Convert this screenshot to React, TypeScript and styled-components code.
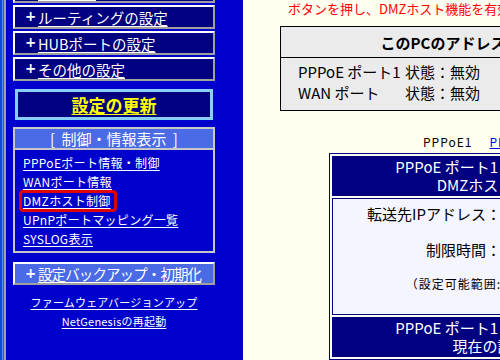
import React from "react";
import styled, { createGlobalStyle } from "styled-components";

const GlobalStyle = createGlobalStyle`
  html, body {
    margin: 0;
    padding: 0;
    width: 500px;
    height: 360px;
    overflow: hidden;
    background: #fffff0;
  }
  body {
    font-family: "Noto Sans CJK JP", "Noto Sans", sans-serif;
  }
`;

const Page = styled.div`
  display: flex;
  width: 500px;
  height: 360px;
  overflow: hidden;
`;

const Edge = styled.div`
  flex: none;
  width: 6px;
  background: linear-gradient(to right, #1848d8 0 2px, #5a8cff 2px 3px, #2858e0 3px 4px, #a0a0a8 4px 6px);
`;

const Menu = styled.div`
  flex: none;
  width: 237px;
  box-sizing: border-box;
  padding: 0 28px 0 7px;
  background: #0000cc;
  display: flex;
  flex-direction: column;
`;

const MenuButton = styled.div<{ $light?: boolean; $top?: number }>`
  height: ${(p) => (p.$light ? 23 : 24)}px;
  box-sizing: border-box;
  margin-top: ${(p) => p.$top ?? 2}px;
  border: 2px solid;
  border-color: #ffffff #a0a0a0 #a0a0a0 #ffffff;
  background: ${(p) => (p.$light ? "#4a6ae6" : "#000080")};
  display: flex;
  align-items: center;
  padding-left: 10px;
  color: #fff;
  font-size: 14.5px;
  white-space: nowrap;
`;

const Plus = styled.span`
  flex: none;
  width: 13px;
  font-family: "DejaVu Sans", sans-serif;
  font-size: 13.5px;
  font-weight: bold;
  line-height: 1;
`;

const MenuLink = styled.a<{ $tight?: boolean }>`
  color: #fff;
  text-decoration: underline;
  text-underline-offset: 2px;
  letter-spacing: ${(p) => (p.$tight ? "-0.9px" : "0")};
`;

const UpdateBox = styled.div`
  margin: 8px 2px 0;
  height: 31px;
  box-sizing: border-box;
  border: 3px solid #87cefa;
  background: #000080;
  display: flex;
  align-items: center;
  justify-content: center;
  color: #ffff00;
  font-size: 17px;
  font-weight: bold;
  text-decoration: underline;
  text-underline-offset: 2px;
`;

const Section = styled.div`
  margin-top: 7px;
  height: 126px;
  box-sizing: border-box;
  border: 2px solid #c8c8c8;
  display: flex;
  flex-direction: column;
`;

const SectionHead = styled.div`
  height: 21px;
  box-sizing: border-box;
  border-bottom: 2px solid #c8c8c8;
  background: #4a6ae6;
  color: #fff;
  font-size: 15px;
  display: flex;
  align-items: center;
  justify-content: center;
  white-space: nowrap;
  word-spacing: 3px;
`;

const LinkList = styled.div`
  padding: 3px 0 0 8px;
  display: flex;
  flex-direction: column;
`;

const LinkRow = styled.div`
  height: 19px;
  display: flex;
  align-items: center;
  font-size: 12px;
  letter-spacing: 0.3px;
  white-space: nowrap;
`;

const SmallLink = styled.a<{ $marked?: boolean }>`
  color: #fff;
  text-decoration: underline;
  text-underline-offset: 2px;
  line-height: 16px;
  ${(p) =>
    p.$marked &&
    `
    border: 3px solid #e00000;
    border-radius: 4px;
    padding: 0 3px 0 1px;
    margin-left: -4px;
  `}
`;

const Footer = styled.div`
  margin-top: 8px;
  display: flex;
  flex-direction: column;
  align-items: center;
`;

const FooterLink = styled.a`
  height: 19px;
  line-height: 19px;
  color: #fff;
  font-size: 11px;
  letter-spacing: 0.2px;
  text-decoration: underline;
  text-underline-offset: 2px;
  white-space: nowrap;
`;

const Content = styled.div`
  flex: 1;
  min-width: 0;
  overflow: hidden;
  background: #fffff0;
  display: flex;
  flex-direction: column;
  align-items: flex-start;
`;

const Notice = styled.div`
  margin-left: 45px;
  height: 17px;
  line-height: 17px;
  color: #ff0000;
  font-size: 13px;
  white-space: nowrap;
`;

const InfoTable = styled.div`
  flex: none;
  margin: 9px 0 0 37px;
  width: 324px;
  border: 1px solid #000;
  background: #ebebeb;
`;

const InfoHead = styled.div`
  height: 30px;
  border-bottom: 1px solid #000;
  display: flex;
  align-items: center;
  justify-content: center;
  font-size: 15px;
  font-weight: bold;
  color: #000;
`;

const InfoBody = styled.div`
  padding: 3px 0 7px 17px;
  display: grid;
  grid-template-columns: 107px auto;
  grid-auto-rows: 21px;
  align-items: center;
  font-size: 15px;
  color: #000;
  white-space: nowrap;
`;

const PortLinks = styled.div`
  margin: 23px 0 0 180px;
  display: flex;
  gap: 17px;
  line-height: 16px;
  font-size: 12px;
  letter-spacing: 1px;
  white-space: nowrap;
  color: #000;
`;

const PortLink = styled.a`
  color: #0000ff;
  text-decoration: underline;
`;

const DmzTable = styled.div`
  flex: none;
  margin: 3px 0 0 86px;
  width: 322px;
  box-sizing: border-box;
  border: 1px solid #000080;
  padding: 2px;
  display: flex;
  flex-direction: column;
  gap: 2px;
`;

const HeadCell = styled.div`
  height: 40px;
  box-sizing: border-box;
  padding-top: 2px;
  background: #000080;
  color: #fff;
  font-size: 15px;
  text-align: center;
  white-space: nowrap;
`;

const HeadLine = styled.div`
  height: 18px;
  line-height: 18px;
`;

const BodyCell = styled.div`
  height: 117px;
  box-sizing: border-box;
  border: 1px solid #000080;
  background: #f5f5ff;
  display: grid;
  grid-template-columns: 168px 1fr;
  grid-template-rows: 28px 44px 24px;
  align-items: center;
  color: #000;
  white-space: nowrap;
`;

const Label = styled.div<{ $small?: boolean }>`
  text-align: right;
  font-size: ${(p) => (p.$small ? 12 : 15)}px;
  letter-spacing: ${(p) => (p.$small ? 1 : 0)}px;
`;

export default function App() {
  return (
    <Page>
      <GlobalStyle />
      <Edge />
      <Menu>
        <MenuButton $top={-21}>
          <Plus>+</Plus>
          <MenuLink>基本設定</MenuLink>
        </MenuButton>
        <MenuButton>
          <Plus>+</Plus>
          <MenuLink>ルーティングの設定</MenuLink>
        </MenuButton>
        <MenuButton>
          <Plus>+</Plus>
          <MenuLink>HUBポートの設定</MenuLink>
        </MenuButton>
        <MenuButton>
          <Plus>+</Plus>
          <MenuLink>その他の設定</MenuLink>
        </MenuButton>

        <UpdateBox>設定の更新</UpdateBox>

        <Section>
          <SectionHead>[ 制御・情報表示 ]</SectionHead>
          <LinkList>
            <LinkRow>
              <SmallLink>PPPoEポート情報・制御</SmallLink>
            </LinkRow>
            <LinkRow>
              <SmallLink>WANポート情報</SmallLink>
            </LinkRow>
            <LinkRow>
              <SmallLink $marked>DMZホスト制御</SmallLink>
            </LinkRow>
            <LinkRow>
              <SmallLink>UPnPポートマッピング一覧</SmallLink>
            </LinkRow>
            <LinkRow>
              <SmallLink>SYSLOG表示</SmallLink>
            </LinkRow>
          </LinkList>
        </Section>

        <MenuButton $light $top={9}>
          <Plus>+</Plus>
          <MenuLink $tight>設定バックアップ・初期化</MenuLink>
        </MenuButton>

        <Footer>
          <FooterLink>ファームウェアバージョンアップ</FooterLink>
          <FooterLink>NetGenesisの再起動</FooterLink>
        </Footer>
      </Menu>

      <Content>
        <Notice>ボタンを押し、DMZホスト機能を有効にしてください。</Notice>

        <InfoTable>
          <InfoHead>このPCのアドレス</InfoHead>
          <InfoBody>
            <span>PPPoE ポート1</span>
            <span>状態：無効</span>
            <span>WAN ポート</span>
            <span>状態：無効</span>
          </InfoBody>
        </InfoTable>

        <PortLinks>
          <span>PPPoE1</span>
          <PortLink>PPPoE2</PortLink>
        </PortLinks>

        <DmzTable>
          <HeadCell>
            <HeadLine>PPPoE ポート1（接続先 1）</HeadLine>
            <HeadLine>DMZホスト設定</HeadLine>
          </HeadCell>
          <BodyCell>
            <Label>転送先IPアドレス：</Label>
            <span />
            <Label>制限時間：</Label>
            <span />
            <Label $small>（設定可能範囲:</Label>
            <span />
          </BodyCell>
          <HeadCell>
            <HeadLine>PPPoE ポート1（接続先 1）</HeadLine>
            <HeadLine>現在の設定</HeadLine>
          </HeadCell>
        </DmzTable>
      </Content>
    </Page>
  );
}
